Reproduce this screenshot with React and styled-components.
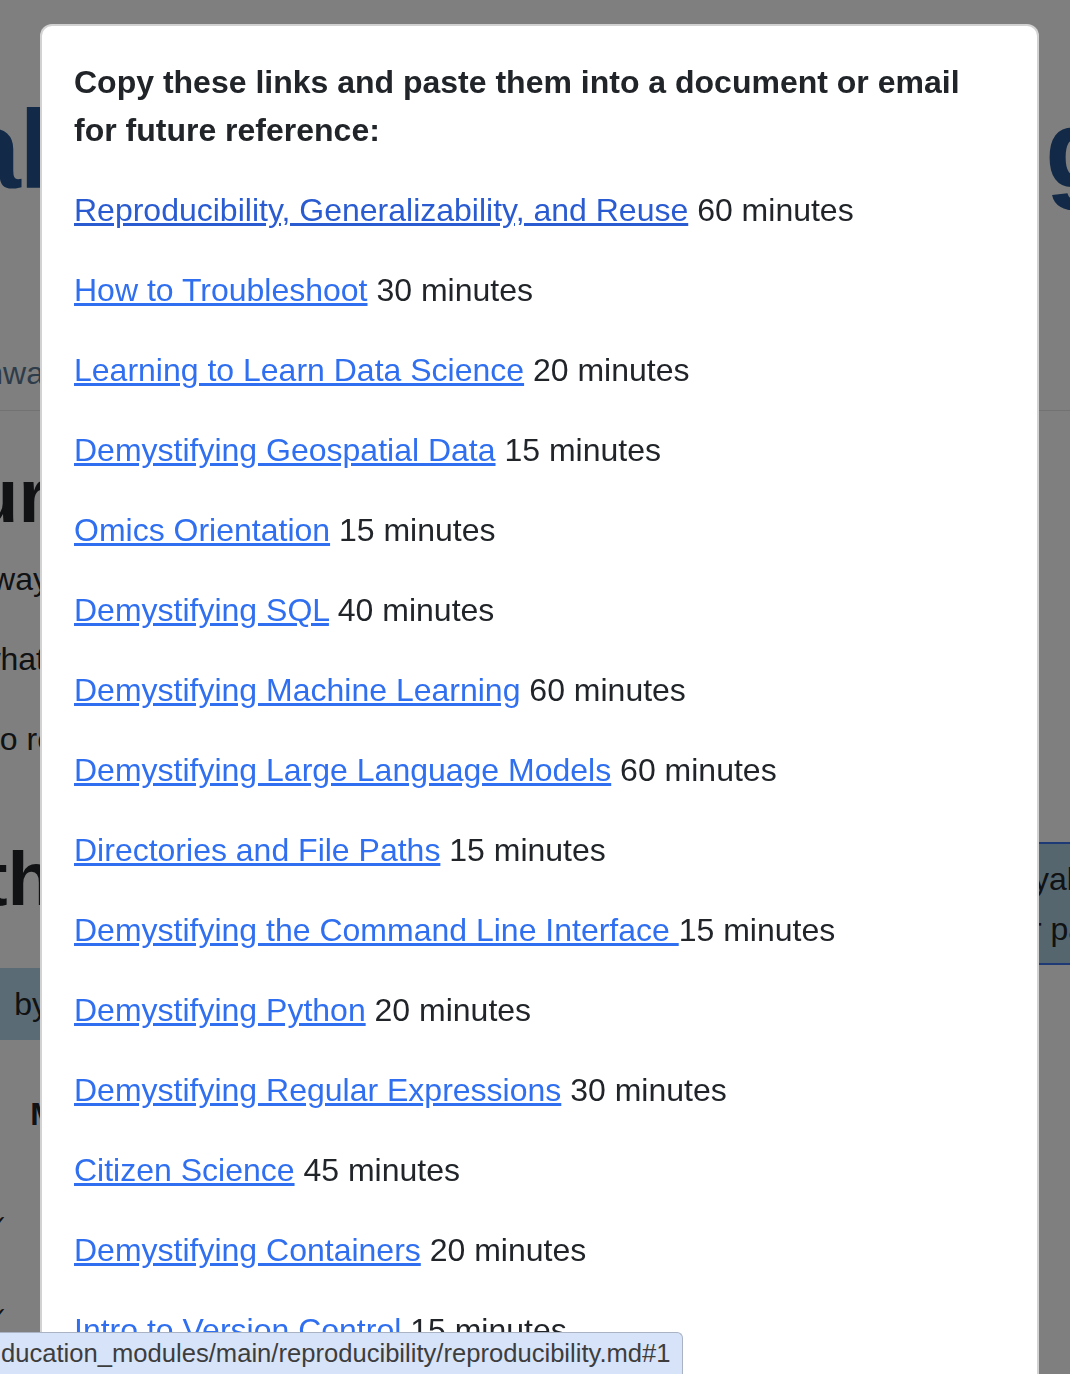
import React from 'react';
import styled, { createGlobalStyle } from 'styled-components';

const links = [
	{ title: 'Reproducibility, Generalizability, and Reuse', time: '60 minutes', hover: true },
	{ title: 'How to Troubleshoot', time: '30 minutes' },
	{ title: 'Learning to Learn Data Science', time: '20 minutes' },
	{ title: 'Demystifying Geospatial Data', time: '15 minutes' },
	{ title: 'Omics Orientation', time: '15 minutes' },
	{ title: 'Demystifying SQL', time: '40 minutes' },
	{ title: 'Demystifying Machine Learning', time: '60 minutes' },
	{ title: 'Demystifying Large Language Models', time: '60 minutes' },
	{ title: 'Directories and File Paths', time: '15 minutes' },
	{ title: 'Demystifying the Command Line Interface ', time: '15 minutes' },
	{ title: 'Demystifying Python', time: '20 minutes' },
	{ title: 'Demystifying Regular Expressions', time: '30 minutes' },
	{ title: 'Citizen Science', time: '45 minutes' },
	{ title: 'Demystifying Containers', time: '20 minutes' },
	{ title: 'Intro to Version Control', time: '15 minutes' },
];

const App = () => {
	return (
		<>
			<GlobalStyle />
			<Page>
				<EdgeStack>
					<Spacer $h={90} />
					<Title $side='left'>
						<Frag $cut={6}>Educational</Frag>
					</Title>
					<NavRow $side='left'>
						<Frag $cut={2}>Onwa</Frag>
					</NavRow>
					<Line $big $top={39}>
						<Frag $cut={6}>Your</Frag>
					</Line>
					<Line $top={14}>
						<Frag $cut={23}>always</Frag>
					</Line>
					<Line $top={32}>
						<Frag $cut={3}>what</Frag>
					</Line>
					<Line $top={32}>
						<Frag $cut={13}>to re</Frag>
					</Line>
					<Line $big $top={70}>
						<Frag $cut={12}>with</Frag>
					</Line>
					<Callout $top={44}>
						<Frag $cut={6}>by</Frag>
					</Callout>
					<Line $bold $top={50}>
						<Frag $cut={15}>M</Frag>
					</Line>
					<Line $side='right' $small $top={62}>
						<Frag $lead={12}>✓</Frag>
					</Line>
					<Line $side='right' $small $top={44}>
						<Frag $lead={12}>✓</Frag>
					</Line>
				</EdgeStack>
				<div />
				<EdgeStack>
					<Spacer $h={90} />
					<Title $side='right'>
						<Frag $lead={-6}>g</Frag>
					</Title>
					<NavRow $side='right' />
					<SideBox $top={431}>
						<Line $side='right' $tall>
							<Frag $lead={31}>loyal</Frag>
						</Line>
						<Line $side='right' $tall>
							<Frag $lead={8}>r pa</Frag>
						</Line>
					</SideBox>
				</EdgeStack>
			</Page>

			<Backdrop>
				<Modal>
					<Heading>
						Copy these links and paste them into a document or email for future
						reference:
					</Heading>
					{links.map(l => (
						<Row key={l.title}>
							<Link href='#1' $hover={l.hover}>
								{l.title}
							</Link>{' '}
							{l.time}
						</Row>
					))}
				</Modal>
			</Backdrop>

			<StatusBubble>ducation_modules/main/reproducibility/reproducibility.md#1</StatusBubble>
		</>
	);
};

const GlobalStyle = createGlobalStyle`
	html, body {
		margin: 0;
		padding: 0;
		overflow: hidden;
	}
	body {
		background: #fff;
		font-family: 'Liberation Sans', Arial, Helvetica, sans-serif;
		color: #212529;
	}
`;

const Page = styled.div`
	display: grid;
	grid-template-columns: 42px 1fr 31px;
	height: 1374px;
	overflow: hidden;
`;

const EdgeStack = styled.div`
	display: flex;
	flex-direction: column;
	min-width: 0;
	overflow: hidden;
`;

const Spacer = styled.div`
	height: ${props => props.$h}px;
	flex-shrink: 0;
`;

const Frag = styled.span`
	flex-shrink: 0;
	margin-right: ${props => (props.$cut ? -props.$cut : 0)}px;
	margin-left: ${props => (props.$lead ? -props.$lead : 0)}px;
`;

const Title = styled.div`
	display: flex;
	justify-content: ${props => (props.$side === 'right' ? 'flex-start' : 'flex-end')};
	height: 120px;
	line-height: 120px;
	font-size: 112px;
	font-weight: 700;
	letter-spacing: -2px;
	color: #24548e;
	white-space: nowrap;
	overflow: hidden;
`;

const NavRow = styled.div`
	display: flex;
	align-items: flex-end;
	justify-content: ${props => (props.$side === 'right' ? 'flex-start' : 'flex-end')};
	box-sizing: border-box;
	height: 201px;
	padding-bottom: 13px;
	border-bottom: 1px solid #e4e4e4;
	font-size: 32px;
	line-height: 48px;
	color: #5c7894;
	white-space: nowrap;
	overflow: hidden;
`;

const Line = styled.div`
	display: flex;
	justify-content: ${props => (props.$side === 'right' ? 'flex-start' : 'flex-end')};
	margin-top: ${props => props.$top || 0}px;
	font-size: ${props => (props.$big ? 76 : props.$small ? 24 : 32)}px;
	line-height: ${props => (props.$big ? 91 : props.$tall ? 50 : 48)}px;
	font-weight: ${props => (props.$big || props.$bold ? 700 : 400)};
	color: #212529;
	white-space: nowrap;
	overflow: hidden;
	flex-shrink: 0;
`;

const Callout = styled.div`
	display: flex;
	justify-content: flex-end;
	margin-top: ${props => props.$top}px;
	padding: 12px 0;
	background: #b6d6ea;
	font-size: 32px;
	line-height: 48px;
	color: #212529;
	white-space: nowrap;
	overflow: hidden;
	flex-shrink: 0;
`;

const SideBox = styled.div`
	margin-top: ${props => props.$top}px;
	padding: 10px 0 9px;
	background: #accdde;
	border-top: 2px solid #3a72ec;
	border-bottom: 2px solid #3a72ec;
	flex-shrink: 0;
`;

const Backdrop = styled.div`
	position: fixed;
	inset: 0;
	background: rgba(0, 0, 0, 0.5);
	overflow: hidden;
`;

const Modal = styled.div`
	box-sizing: border-box;
	width: 999px;
	margin: 24px 0 0 40px;
	padding: 32px;
	background: #fff;
	border: 2px solid rgba(0, 0, 0, 0.175);
	border-radius: 12px;
`;

const Heading = styled.p`
	margin: 0 0 32px;
	font-size: 32px;
	line-height: 48px;
	font-weight: 700;
	color: #212529;
`;

const Row = styled.p`
	margin: 0 0 32px;
	font-size: 32px;
	line-height: 48px;
	color: #212529;
`;

const Link = styled.a`
	color: ${props => (props.$hover ? '#2a5bd0' : '#2f6ff0')};
	text-decoration: underline;
`;

const StatusBubble = styled.div`
	position: fixed;
	left: 0;
	bottom: 0;
	box-sizing: border-box;
	width: 683px;
	height: 42px;
	padding-left: 1px;
	background: #d7e3f8;
	border-top: 1px solid #aab3c4;
	border-right: 1px solid #aab3c4;
	border-top-right-radius: 6px;
	font-size: 25.6px;
	line-height: 41px;
	color: #3d3d3d;
	white-space: nowrap;
	overflow: hidden;
`;

export default App;
